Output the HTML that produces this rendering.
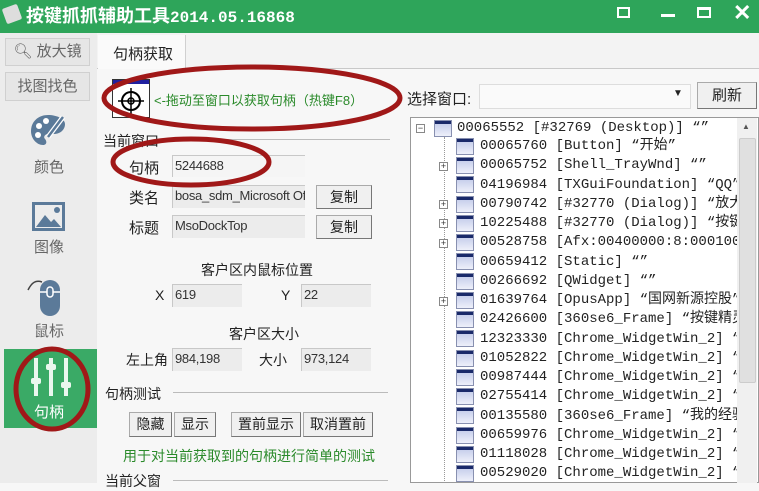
<!DOCTYPE html>
<html><head><meta charset="utf-8"><style>
*{margin:0;padding:0;box-sizing:border-box}
body{width:759px;height:483px;overflow:hidden;position:relative;background:#f7f7f7;font-family:"Liberation Sans","Noto Sans CJK SC",sans-serif;font-size:14px;color:#222}
.a{position:absolute;white-space:nowrap}
.inp{position:absolute;background:#ececec;border-top:1px solid #c8c8c8;border-left:1px solid #c8c8c8;font-size:13px;padding:2px 2px;color:#333;overflow:hidden;white-space:nowrap;letter-spacing:-0.3px}
.btn{position:absolute;background:#f0f0f0;border:1px solid #aaa;border-right-color:#777;border-bottom-color:#777;text-align:center;font-size:14px;line-height:22px}
.tree{font-family:"Liberation Mono","Noto Sans CJK SC",monospace;font-size:14px}
.ic{position:absolute;width:18px;height:17px;background:linear-gradient(#1a2a6a 0,#1a2a6a 3px,#c8d0ec 3px,#eef0fa 100%);border:1px solid #8890b0}
.pl{position:absolute;width:9px;height:9px;border:1px solid #888;background:#fff;font-size:9px;line-height:7px;text-align:center;color:#333;font-family:"Liberation Sans"}
</style></head><body>
<div class="a" style="left:0;top:0;width:759px;height:33px;background:#2ea55a"></div>
<div class="a" style="left:4px;top:6px;width:16px;height:16px;background:#ddd;transform:rotate(-20deg);border-radius:2px"></div>
<div class="a" style="left:26px;top:5px;font-size:18px;font-weight:bold;color:#fff;line-height:22px">按键抓抓辅助工具<span style="font-family:'Liberation Mono',monospace;font-size:16px">2014.05.16868</span></div>
<div class="a" style="left:617px;top:7px;width:13px;height:11px;border:2px solid #fff"></div>
<div class="a" style="left:661px;top:14px;width:14px;height:3px;background:#fff"></div>
<div class="a" style="left:697px;top:7px;width:14px;height:11px;border:2px solid #fff;border-top-width:3px"></div>
<div class="a" style="left:733px;top:0px;color:#fff;font-size:22px;font-weight:bold">✕</div>
<div class="a" style="left:0;top:33px;width:97px;height:450px;background:#ececec"></div>
<div class="btn" style="left:5px;top:38px;width:85px;height:28px;line-height:26px;color:#666;font-size:15px;background:#e6e6e6;border-color:#d0d0d0">&#x1F50D;&#xFE0E; 放大镜</div>
<div class="btn" style="left:5px;top:72px;width:85px;height:29px;line-height:27px;color:#666;font-size:15px;background:#e6e6e6;border-color:#d0d0d0">找图找色</div>
<svg class="a" style="left:30px;top:113px" width="36" height="36" viewBox="0 0 36 36"><path d="M18 2C8 2 1 9 1 18c0 8 6 14 12 14 4 0 4-4 2-6-2-2 0-5 3-5h6c6 0 11-4 11-10C35 6 27 2 18 2z" fill="#5b7a99"/><circle cx="9" cy="13" r="3" fill="#fff"/><circle cx="16" cy="8" r="3" fill="#fff"/><circle cx="8" cy="22" r="3" fill="#fff"/><path d="M33 4L18 24" stroke="#fff" stroke-width="5"/><path d="M33 4L18 24" stroke="#5b7a99" stroke-width="2.5"/></svg>
<div class="a" style="left:34px;top:156px;color:#666;font-size:15px">颜色</div>
<svg class="a" style="left:32px;top:202px" width="33" height="29"><rect x="1.5" y="1.5" width="30" height="26" fill="none" stroke="#5b7a99" stroke-width="3"/><path d="M4 25L13 13L19 20L22 17L29 25Z" fill="#5b7a99"/><circle cx="25" cy="8" r="3" fill="#5b7a99"/></svg>
<div class="a" style="left:34px;top:236px;color:#666;font-size:15px">图像</div>
<svg class="a" style="left:26px;top:276px" width="40" height="42"><path d="M2 14C6 6 10 4 16 6" stroke="#444" fill="none" stroke-width="1.5"/><rect x="14" y="4" width="20" height="36" rx="10" fill="#5b7a99"/><path d="M14 16H34" stroke="#fff" stroke-width="1.5"/><rect x="21" y="11" width="6" height="10" rx="3" fill="#5b7a99" stroke="#fff" stroke-width="1.5"/></svg>
<div class="a" style="left:34px;top:320px;color:#666;font-size:15px">鼠标</div>
<div class="a" style="left:4px;top:349px;width:93px;height:79px;background:#3aaa66"></div>
<svg class="a" style="left:31px;top:356px" width="40" height="42"><g fill="#eaf7ee"><rect x="3" y="2" width="4" height="38"/><rect x="0" y="22" width="10" height="6" rx="2"/><rect x="18" y="2" width="4" height="38"/><rect x="15" y="8" width="10" height="6" rx="2"/><rect x="33" y="2" width="4" height="38"/><rect x="30" y="26" width="10" height="6" rx="2"/></g></svg>
<div class="a" style="left:34px;top:401px;color:#fff;font-size:15px">句柄</div>
<svg class="a" style="left:0;top:340px" width="110" height="100"><ellipse cx="52" cy="49" rx="36" ry="40" fill="none" stroke="#a01818" stroke-width="5"/></svg>
<div class="a" style="left:97px;top:33px;width:662px;height:36px;background:#f3f3f3;border-bottom:1px solid #c8c8c8"></div>
<div class="a" style="left:98px;top:35px;width:88px;height:34px;background:#fafafa;border-right:1px solid #d0d0d0"></div>
<div class="a" style="left:113px;top:43px;font-size:15px">句柄获取</div>
<div class="a" style="left:112px;top:79px;width:38px;height:39px;border:1px solid #333;background:#fff"></div>
<div class="a" style="left:113px;top:80px;width:36px;height:4px;background:#2020a0"></div>
<svg class="a" style="left:116px;top:86px" width="30" height="30"><circle cx="15" cy="15" r="9" fill="none" stroke="#000" stroke-width="2"/><circle cx="15" cy="15" r="3" fill="none" stroke="#000" stroke-width="1.5"/><path d="M15 2V28M2 15H28" stroke="#000" stroke-width="1.5"/></svg>
<div class="a" style="left:154px;top:90px;color:#2a8a2a;font-size:13px">&lt;-拖动至窗口以获取句柄（热键F8）</div>
<div class="a" style="left:103px;top:131px;font-size:14px">当前窗口</div>
<div class="a" style="left:160px;top:139px;width:230px;border-top:1px solid #bbb"></div>
<div class="a" style="left:129px;top:157px;font-size:15px">句柄</div>
<div class="inp" style="left:172px;top:155px;width:133px;height:22px;background:#f5f5f5">5244688</div>
<div class="a" style="left:129px;top:187px;font-size:15px">类名</div>
<div class="inp" style="left:172px;top:185px;width:133px;height:23px">bosa_sdm_Microsoft Of</div>
<div class="btn" style="left:316px;top:185px;width:56px;height:24px">复制</div>
<div class="a" style="left:129px;top:217px;font-size:15px">标题</div>
<div class="inp" style="left:172px;top:215px;width:133px;height:23px">MsoDockTop</div>
<div class="btn" style="left:316px;top:215px;width:56px;height:24px">复制</div>
<div class="a" style="left:201px;top:260px;font-size:14px">客户区内鼠标位置</div>
<div class="a" style="left:155px;top:287px;font-size:14px">X</div>
<div class="inp" style="left:172px;top:284px;width:70px;height:23px">619</div>
<div class="a" style="left:281px;top:287px;font-size:14px">Y</div>
<div class="inp" style="left:301px;top:284px;width:70px;height:23px">22</div>
<div class="a" style="left:229px;top:324px;font-size:14px">客户区大小</div>
<div class="a" style="left:126px;top:350px;font-size:14px">左上角</div>
<div class="inp" style="left:172px;top:348px;width:70px;height:23px">984,198</div>
<div class="a" style="left:259px;top:350px;font-size:14px">大小</div>
<div class="inp" style="left:301px;top:348px;width:70px;height:23px">973,124</div>
<div class="a" style="left:105px;top:384px;font-size:14px">句柄测试</div>
<div class="a" style="left:173px;top:392px;width:215px;border-top:1px solid #bbb"></div>
<div class="btn" style="left:129px;top:412px;width:43px;height:25px">隐藏</div>
<div class="btn" style="left:174px;top:412px;width:42px;height:25px">显示</div>
<div class="btn" style="left:231px;top:412px;width:70px;height:25px">置前显示</div>
<div class="btn" style="left:303px;top:412px;width:70px;height:25px">取消置前</div>
<div class="a" style="left:123px;top:446px;color:#2a8a2a;font-size:14px">用于对当前获取到的句柄进行简单的测试</div>
<div class="a" style="left:105px;top:471px;font-size:14px">当前父窗</div>
<div class="a" style="left:173px;top:480px;width:215px;border-top:1px solid #bbb"></div>
<svg class="a" style="left:0;top:0" width="410" height="200"><ellipse cx="252" cy="98" rx="148" ry="31" fill="none" stroke="#a01818" stroke-width="5"/><ellipse cx="191" cy="162" rx="78" ry="23" fill="none" stroke="#a01818" stroke-width="5"/></svg>
<div class="a" style="left:407px;top:88px;font-size:15px">选择窗口:</div>
<div class="a" style="left:479px;top:84px;width:212px;height:25px;background:#fafafa;border:1px solid #ddd"></div>
<div class="a" style="left:673px;top:88px;font-size:10px">▼</div>
<div class="btn" style="left:697px;top:82px;width:60px;height:27px;line-height:25px;font-size:15px">刷新</div>
<div class="a" style="left:410px;top:117px;width:349px;height:366px;background:#fff;border:1px solid #999"></div>
<div class="a" style="left:737px;top:118px;width:20px;height:365px;background:#f0f0f0"></div>
<div class="a" style="left:739px;top:138px;width:17px;height:245px;background:#e0e0e0;border:1px solid #ccc;border-radius:2px"></div>
<div class="a" style="left:742px;top:122px;font-size:8px;color:#555">▲</div>
<div class="a tree" style="left:410px;top:118px;width:327px;height:365px;overflow:hidden">
<div class="pl" style="left:6px;top:6px">−</div>
<div class="ic" style="left:24px;top:2px"></div>
<div class="a" style="left:47px;top:2px">00065552 [#32769 (Desktop)] “”</div>
<div class="a" style="left:34px;top:19px;height:350px;border-left:1px dotted #999"></div>
</div>
<div class="a tree" style="left:410px;top:118px;width:327px;height:365px;overflow:hidden">
<div class="a" style="left:70px;top:19px;line-height:19.25px">00065760 [Button] “开始”<br>00065752 [Shell_TrayWnd] “”<br>04196984 [TXGuiFoundation] “QQ”<br>00790742 [#32770 (Dialog)] “放大镜”<br>10225488 [#32770 (Dialog)] “按键抓抓”<br>00528758 [Afx:00400000:8:00010003]<br>00659412 [Static] “”<br>00266692 [QWidget] “”<br>01639764 [OpusApp] “国网新源控股”<br>02426600 [360se6_Frame] “按键精灵”<br>12323330 [Chrome_WidgetWin_2] “”<br>01052822 [Chrome_WidgetWin_2] “”<br>00987444 [Chrome_WidgetWin_2] “”<br>02755414 [Chrome_WidgetWin_2] “”<br>00135580 [360se6_Frame] “我的经验”<br>00659976 [Chrome_WidgetWin_2] “”<br>01118028 [Chrome_WidgetWin_2] “”<br>00529020 [Chrome_WidgetWin_2] “”</div>
<div class="ic" style="left:46px;top:20px"></div><div class="ic" style="left:46px;top:39px"></div><div class="ic" style="left:46px;top:58px"></div><div class="ic" style="left:46px;top:78px"></div><div class="ic" style="left:46px;top:97px"></div><div class="ic" style="left:46px;top:116px"></div><div class="ic" style="left:46px;top:135px"></div><div class="ic" style="left:46px;top:155px"></div><div class="ic" style="left:46px;top:174px"></div><div class="ic" style="left:46px;top:193px"></div><div class="ic" style="left:46px;top:212px"></div><div class="ic" style="left:46px;top:232px"></div><div class="ic" style="left:46px;top:251px"></div><div class="ic" style="left:46px;top:270px"></div><div class="ic" style="left:46px;top:289px"></div><div class="ic" style="left:46px;top:309px"></div><div class="ic" style="left:46px;top:328px"></div><div class="ic" style="left:46px;top:347px"></div>
<div class="pl" style="left:29px;top:44px">+</div><div class="pl" style="left:29px;top:82px">+</div><div class="pl" style="left:29px;top:101px">+</div><div class="pl" style="left:29px;top:121px">+</div><div class="pl" style="left:29px;top:179px">+</div>
</div>
</body></html>
